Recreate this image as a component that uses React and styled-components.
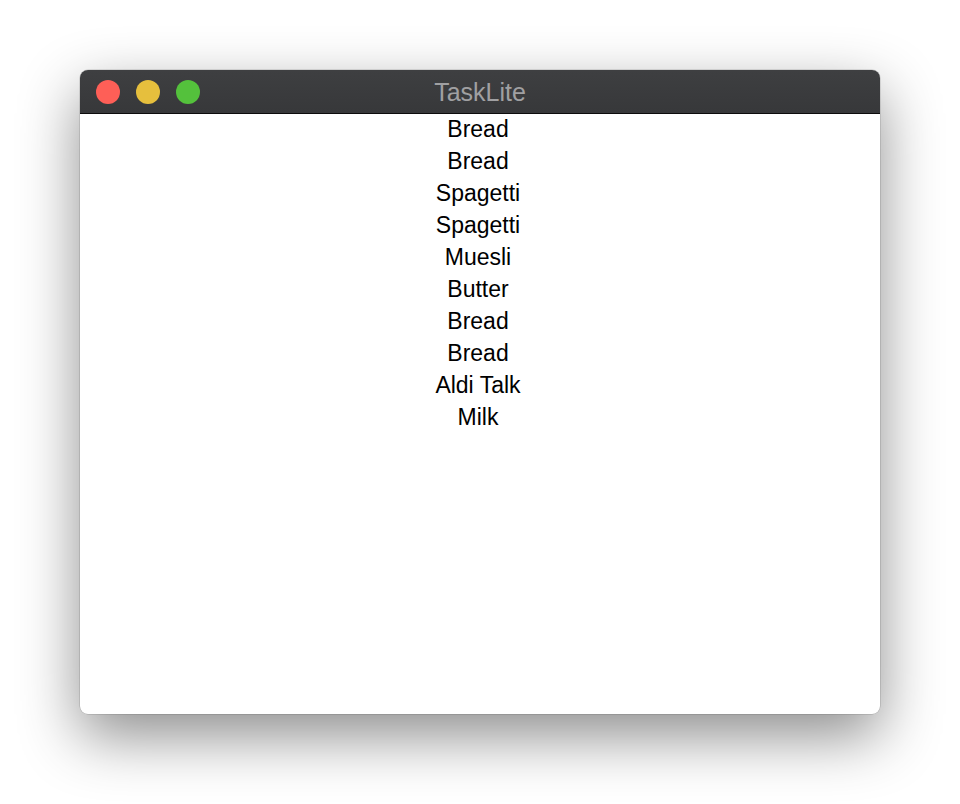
import { createGlobalStyle, styled } from "styled-components";

const items = [
  "Bread",
  "Bread",
  "Spagetti",
  "Spagetti",
  "Muesli",
  "Butter",
  "Bread",
  "Bread",
  "Aldi Talk",
  "Milk",
];

function App() {
  return (
    <>
      <GlobalStyle />
      <Desktop>
        <Window>
          <TitleBar>
            <Lights>
              <Light color="#fe5f57" />
              <Light color="#e6bf3d" />
              <Light color="#54c13c" />
            </Lights>
            <Title>TaskLite</Title>
          </TitleBar>
          <TaskList>
            {items.map((item, i) => (
              <Task key={i}>{item}</Task>
            ))}
          </TaskList>
        </Window>
      </Desktop>
    </>
  );
}

export default App;

const GlobalStyle = createGlobalStyle`
  body {
    margin: 0;
    background: #ffffff;
    font-family: "Liberation Sans", Arial, sans-serif;
  }
`;

const Desktop = styled.div`
  width: 960px;
  height: 804px;
  padding: 70px 80px 0;
  box-sizing: border-box;
`;

const Window = styled.div`
  width: 800px;
  height: 644px;
  background: #ffffff;
  border-radius: 8px;
  overflow: hidden;
  box-shadow: 0 22px 60px rgba(0, 0, 0, 0.45), 0 0 0 0.5px rgba(0, 0, 0, 0.2);
  display: flex;
  flex-direction: column;
`;

const TitleBar = styled.div`
  height: 43px;
  flex-shrink: 0;
  display: flex;
  align-items: center;
  justify-content: center;
  position: relative;
  background: linear-gradient(#3e3f41, #37383a);
  border-bottom: 1px solid #0c0c0c;
`;

const Lights = styled.div`
  position: absolute;
  left: 16px;
  top: 10px;
  display: flex;
  gap: 16px;
`;

const Light = styled.span`
  width: 24px;
  height: 24px;
  border-radius: 50%;
  background: ${(p) => p.color};
`;

const Title = styled.div`
  font-size: 25px;
  color: #a0a0a2;
  margin-top: 1px;
`;

const TaskList = styled.div`
  display: flex;
  flex-direction: column;
  align-items: center;
  padding-right: 4px;
  margin-top: -1px;
`;

const Task = styled.div`
  font-size: 23px;
  line-height: 32px;
  color: #000000;
`;
